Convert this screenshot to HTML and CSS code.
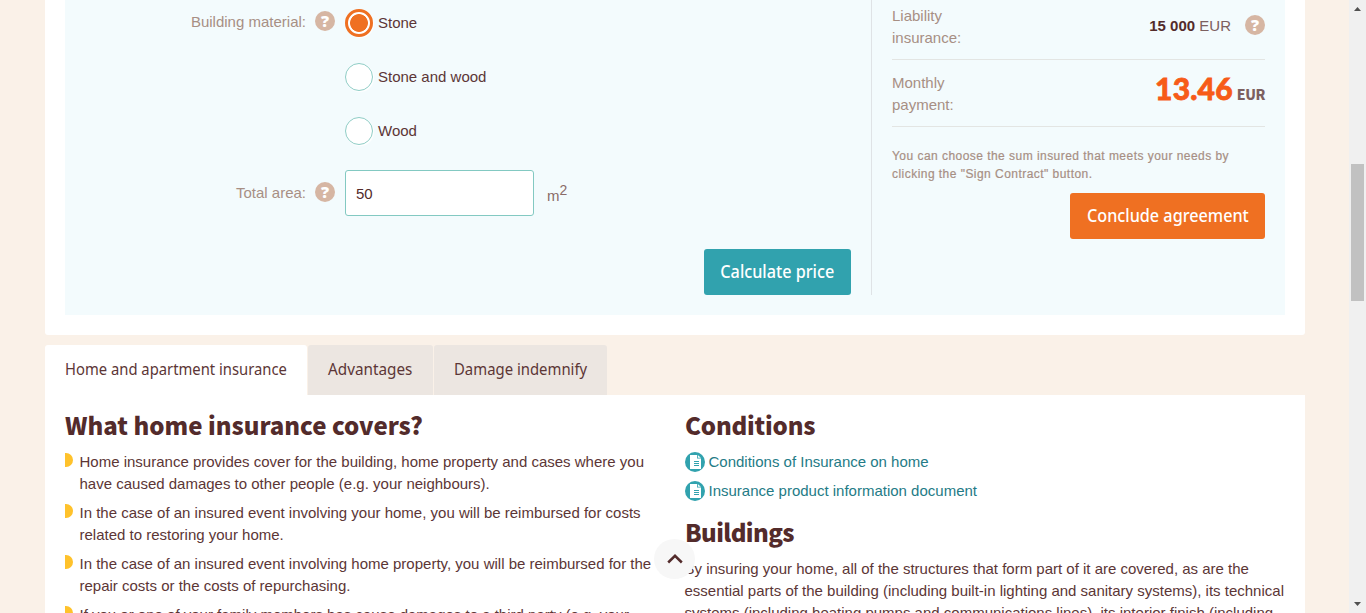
FILE: index.html
```html
<!DOCTYPE html>
<html lang="en">
<head>
<meta charset="utf-8">
<title>Home and apartment insurance</title>
<link rel="stylesheet" href="styles.css">
</head>
<body>
<svg class="defs" aria-hidden="true">
  <symbol id="doc" viewBox="0 0 20 20">
    <circle cx="10" cy="10" r="10" fill="#31a2ae"/>
    <path d="M5 3h7v3.500h4V17H5z" fill="#fff"/>
    <path d="M12.800 3 15.800 5.800h-3z" fill="#fff"/>
    <path d="M9 9.500h5M9 11.500h5M9 13.500h5" stroke="#31a2ae" stroke-width="1"/>
  </symbol>
</svg>
<div class="window">
  <div class="page">
    <section class="calculator">
      <div class="panel">
        <form class="form">
          <div class="row materials">
            <span class="label">Building material:</span>
            <span class="help">?</span>
            <div class="options">
              <label class="option"><span class="radio checked"></span>Stone</label>
              <label class="option"><span class="radio"></span>Stone and wood</label>
              <label class="option"><span class="radio"></span>Wood</label>
            </div>
          </div>
          <div class="row area">
            <span class="label">Total area:</span>
            <span class="help">?</span>
            <input class="input" type="text" value="50">
            <span class="unit">m<sup>2</sup></span>
          </div>
          <button class="button teal" type="button"><span class="calc-text">Calculate price</span></button>
        </form>
        <aside class="summary">
          <div class="sum-row liability">
            <span>Liability<br>insurance:</span>
            <span class="amount"><b>15 000</b> EUR</span>
            <span class="help">?</span>
          </div>
          <div class="sum-row payment">
            <span>Monthly<br>payment:</span>
            <span class="price"><span class="figure">13.46</span><span class="currency">EUR</span></span>
          </div>
          <p class="note">You can choose the sum insured that meets your needs by<br>clicking the "Sign Contract" button.</p>
          <button class="button orange" type="button"><span class="agree-text">Conclude agreement</span></button>
        </aside>
      </div>
    </section>
    <nav class="tabs">
      <a class="tab active"><span class="t1">Home and apartment insurance</span></a>
      <a class="tab second"><span class="t2">Advantages</span></a>
      <a class="tab third"><span class="t3">Damage indemnify</span></a>
    </nav>
    <main class="content">
      <section>
        <h2 class="h-covers">What home insurance covers?</h2>
        <ul class="bullets">
          <li>Home insurance provides cover for the building, home property and cases where you<br>have caused damages to other people (e.g. your neighbours).</li>
          <li>In the case of an insured event involving your home, you will be reimbursed for costs<br>related to restoring your home.</li>
          <li>In the case of an insured event involving home property, you will be reimbursed for the<br>repair costs or the costs of repurchasing.</li>
          <li>If you or one of your family members has cause damages to a third party (e.g. your</li>
        </ul>
      </section>
      <section>
        <h2 class="h-conditions">Conditions</h2>
        <a class="doc"><svg width="20" height="20"><use href="#doc"/></svg>Conditions of Insurance on home</a>
        <a class="doc"><svg width="20" height="20"><use href="#doc"/></svg>Insurance product information document</a>
        <h2 class="h-buildings">Buildings</h2>
        <p class="text">By insuring your home, all of the structures that form part of it are covered, as are the<br>essential parts of the building (including built-in lighting and sanitary systems), its technical<br>systems (including heating pumps and communications lines), its interior finish (including</p>
      </section>
    </main>
    <div class="to-top"><svg width="16" height="10" viewBox="0 0 16 10"><path d="M1.200 8.500 8 1.800l6.800 6.700" fill="none" stroke="#532b2b" stroke-width="2.500"/></svg></div>
  </div>
  <div class="scrollbar">
    <svg width="7" height="4"><path d="M0 4 3.500 0 7 4z" fill="#505050"/></svg>
    <div class="thumb"></div>
    <svg width="7" height="4"><path d="M0 0h7L3.500 4z" fill="#505050"/></svg>
  </div>
</div>
</body>
</html>
```
FILE: styles.css
```css
* { box-sizing: border-box; }
body { margin: 0; overflow: hidden; background: #faf1e8; color: #5c3636; font: 15px/22px "Liberation Sans", Arial, sans-serif; }
.defs { display: none; }
.window { display: flex; height: 613px; overflow: hidden; }
.page { position: relative; width: 1349px; height: 613px; padding: 0 44px 0 45px; overflow: hidden; }
.calculator { height: 335px; padding: 0 20px 20px; background: #fff; border-radius: 0 0 3px 3px; }
.panel { display: flex; height: 315px; padding-bottom: 20px; background: #f3fbfd; }
.form { display: flex; flex-direction: column; width: 807px; padding-right: 20px; border-right: 1px solid #dfe3e6; }
.row { display: grid; grid-template-columns: 241px 20px 190px auto; column-gap: 10px; color: #a78f84; }
.row > .help { margin-left: -1px; }
.options, .input { margin-left: -1px; }
.label { text-align: right; }
.help { display: block; width: 20px; height: 20px; border-radius: 50%; background: #d6b6a3; color: #fff; font: 800 16px/20px "Open Sans", sans-serif; text-align: center; }
.materials { height: 170px; padding-top: 11px; }
.materials .label, .materials .help { align-self: start; }
.options { display: grid; gap: 26px; margin-top: -2px; align-content: start; }
.option { display: flex; align-items: center; gap: 5px; height: 28px; color: #5c3636; white-space: nowrap; }
.radio { width: 28px; height: 28px; border: 1.500px solid #8fcdc6; border-radius: 50%; background: #fff; box-shadow: 1px 1px 1px #fff; }
.checked { border: 3px solid #ef7022; background: radial-gradient(circle, #ef7022 0 8.500px, #fff 9.300px); }
.area { height: 46px; align-items: center; }
.area .help { margin-top: -2px; }
.input { width: 189px; height: 46px; padding: 1px 10px 0; border: 1px solid #83c9c2; border-radius: 3px; background: #fff; color: #532b2b; font: 15px "Liberation Sans", Arial, sans-serif; }
.unit { padding: 6px 0 0 1px; color: #8a6b68; }
.unit sup { font-size: 14px; line-height: 0; vertical-align: 6px; }
.button { height: 46px; padding: 0 0 2px; border: 0; border-radius: 3px; color: #fff; font: 500 18px/44px "Noto Sans", sans-serif; white-space: nowrap; }
.teal { width: 147px; margin-top: 33px; align-self: flex-end; background: #31a2ae; }
.orange { width: 195px; margin-top: 10px; align-self: flex-end; background: #ef7022; }
.button span, .tab span { display: inline-block; }
.calc-text { transform: scaleX(.9); margin: 0 -10px; }
.agree-text { transform: scaleX(.9); margin: 0 -10px; }
.summary { display: flex; flex-direction: column; width: 373px; margin-left: 20px; }
.sum-row { display: flex; border-bottom: 1px solid #e3e5e3; color: #a78f84; }
.liability { height: 60px; padding-top: 5px; }
.liability .help { margin: 10px 0 0 14px; }
.payment { height: 67px; padding-top: 12px; }
.amount { margin: 10px 0 0 auto; color: #7c6060; }
.amount b { color: #532b2b; }
.price { display: flex; align-items: baseline; gap: 4px; margin-left: auto; height: 44px; line-height: 36px; margin-top: -2px; }
.figure { color: #f75b18; font: 900 30px/36px Lato, sans-serif; -webkit-text-stroke: .8px #f75b18; letter-spacing: .2px; }
.currency { color: #7c6060; font: 900 14px/20px "Noto Sans CJK SC", sans-serif; letter-spacing: -.4px; }
.note { margin: 20px 0 0; color: #a78f84; font-size: 12px; letter-spacing: .46px; line-height: 18px; white-space: nowrap; -webkit-text-stroke: .2px #a78f84; }
.tabs { display: flex; gap: 1px; height: 50px; margin-top: 10px; }
.tab { height: 50px; background: #ece6e1; border-radius: 3px 3px 0 0; font: 16px/49px "Noto Sans", sans-serif; text-align: center; white-space: nowrap; }
.tab.active { width: 262px; background: #fff; }
.second { width: 125px; }
.third { width: 173px; }
.tab span { margin: 0 -20px; transform: scaleX(.93); }
.tab .t1 { transform: scaleX(.925); }
.tab .t2 { transform: scaleX(.955); }
.content { display: grid; grid-template-columns: 600px 600px; gap: 20px; height: 300px; padding: 0 20px; background: #fff; }
h2 { margin: 0; color: #532b2b; font: 900 24px/32px "Noto Sans CJK SC", sans-serif; white-space: nowrap; }
.h-covers, .h-conditions { padding-top: 14px; height: 56px; }
.h-conditions { letter-spacing: -.2px; }
.bullets { margin: 0; padding: 0; list-style: none; }
.bullets li { position: relative; margin-bottom: 7px; padding-left: 14.500px; white-space: nowrap; }
.bullets li::before { content: ""; position: absolute; left: 0; top: 2px; width: 8px; height: 14px; border-radius: 0 7px 7px 0; background: #ffc22b; }
.doc { display: flex; align-items: center; gap: 4px; height: 22px; margin: 0 0 7px -.500px; color: #247b86; }
.h-buildings { padding-top: 7px; height: 49px; letter-spacing: -.6px; }
.text { margin: 0 0 0 -.500px; white-space: nowrap; }
.to-top { position: absolute; left: 654px; top: 539px; display: flex; align-items: center; justify-content: center; width: 41px; height: 40px; border-radius: 50%; background: #f7f7f7; }
.scrollbar { display: flex; flex-direction: column; align-items: center; width: 17px; padding: 7px 0; background: #f0f0f0; }
.scrollbar svg { flex: none; }
.thumb { width: 13px; height: 137px; margin: 153px 0 auto; background: #c1c1c1; }
```
